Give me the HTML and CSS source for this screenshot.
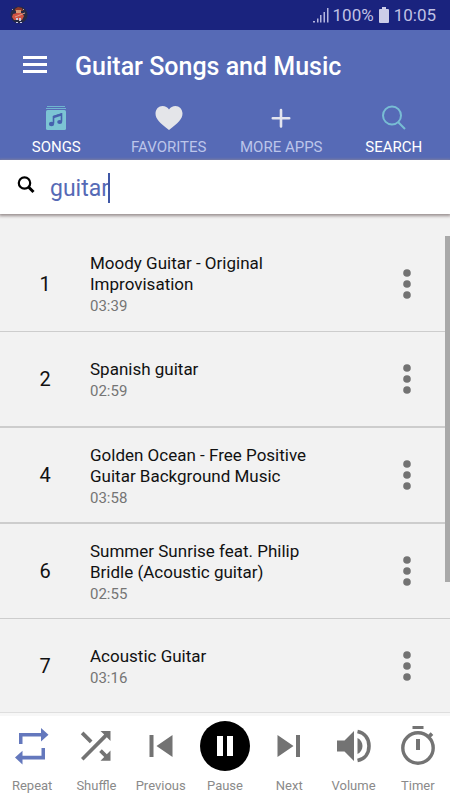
FILE: index.html
```html
<!DOCTYPE html>
<html lang="en">
<head>
<meta charset="utf-8">
<meta name="viewport" content="width=device-width, initial-scale=1">
<title>Guitar Songs and Music</title>
<link rel="stylesheet" href="styles.css">
</head>
<body>
<div class="app">
  <div class="status">
    <svg class="status-app" width="18" height="18" viewBox="0 0 18 18" aria-hidden="true">
      <circle cx="9" cy="9" r="8.500" fill="#272a44"/>
      <path d="M5 3l3-2 4 1 1 3H5z" fill="#8e3a2c"/>
      <path d="M6 4h5v3H6z" fill="#d89a78"/>
      <path d="M3 8l4-1h5l2 3-2 4H4l-2-3z" fill="#cf5142"/>
      <path d="M5 11l10-4" stroke="#d9a08a" stroke-width="1"/>
      <path d="M6 12h2v2H6zM9 12h2v3H9zM6 16h2v1H6zM10 16h2v1h-2z" fill="#c9c8de"/>
      <path d="M2 4l1-1M13 4l1-1" stroke="#b9a798" stroke-width="1"/>
    </svg>
    <div class="status-info">
      <svg class="signal" width="16" height="16" viewBox="0 0 16 16" fill="#b3b5de" aria-hidden="true"><path d="M0 14h2v1.500H0zM4 11.500h1.500v4H4zM7 8h1.500v7.500H7zM10.500 5H12v10.500h-1.500zM14 1h1.500v14.500H14z"/></svg>
      <span>100%</span>
      <svg width="12" height="16" viewBox="0 0 12 16" fill="#cccde8" aria-hidden="true"><path d="M4 0h4v2h2q1 0 1 1v12q0 1-1 1H2q-1 0-1-1V3q0-1 1-1h2z"/></svg>
      <span>10:05</span>
    </div>
  </div>

  <header class="header">
    <div class="titlebar">
      <button class="menu" aria-label="Menu">
        <svg width="24" height="18" viewBox="0 0 24 18" fill="#fff" aria-hidden="true"><path d="M0 0h24v3H0zM0 7h24v3H0zM0 14h24v3H0z"/></svg>
      </button>
      <h1>Guitar Songs and Music</h1>
    </div>
    <nav class="tabs">
      <a class="tab active" href="#songs">
        <svg width="28" height="26" viewBox="0 0 28 26" aria-hidden="true">
          <path d="M5 1h18v1H5zM4 3h20v1H4z" fill="#6fb5cf"/>
          <rect x="4" y="5" width="20" height="20" rx="1.500" fill="#7cc4d4"/>
          <path d="M11.500 18.500v-7l8-2.500v7.500" fill="none" stroke="#4660ae" stroke-width="1.600"/>
          <path d="M11 11l9-3v2.500l-9 3z" fill="#4660ae"/>
          <ellipse cx="9.500" cy="19" rx="2.600" ry="2.200" fill="#4660ae"/>
          <ellipse cx="17.700" cy="17" rx="2.500" ry="2.100" fill="#4660ae"/>
        </svg>
        <span>SONGS</span>
      </a>
      <a class="tab" href="#favorites">
        <svg width="28" height="26" viewBox="0 0 28 26" fill="#e4e5e9" aria-hidden="true"><path d="M14 25C5 18 0.500 14 0.500 8.500 0.500 4 3.800 1 7.500 1 10.200 1 12.700 2.400 14 4.500 15.300 2.400 17.800 1 20.500 1 24.200 1 27.500 4 27.500 8.500 27.500 14 23 18 14 25z"/></svg>
        <span>FAVORITES</span>
      </a>
      <a class="tab" href="#more">
        <svg width="28" height="26" viewBox="0 0 28 26" fill="none" stroke="#e4e5ee" stroke-width="2.600" stroke-linecap="round" aria-hidden="true"><path d="M14 5v16.500M5.800 13.200h16.400"/></svg>
        <span>MORE APPS</span>
      </a>
      <a class="tab active" href="#search">
        <svg width="28" height="26" viewBox="0 0 28 26" fill="none" stroke="#78bdd4" stroke-width="2" aria-hidden="true"><circle cx="12" cy="10.500" r="9"/><path d="M18 17l7 7"/></svg>
        <span>SEARCH</span>
      </a>
    </nav>
  </header>

  <form class="search">
    <label for="query" aria-label="Search songs">
      <svg width="18" height="18" viewBox="0 0 18 18" fill="none" stroke="#000" aria-hidden="true"><circle cx="7.500" cy="7" r="5.700" stroke-width="2.200"/><path d="M11.500 11l5 5" stroke-width="3"/></svg>
    </label>
    <div class="field">
      <input id="query" type="text" value="guitar" autocomplete="off" spellcheck="false">
      <span class="caret"></span>
    </div>
  </form>

  <main class="content">
    <ol class="songs">
      <li class="song"><span class="num">1</span><div class="info"><h2>Moody Guitar - Original Improvisation</h2><p>03:39</p></div><button class="more" aria-label="Options"><svg width="8" height="30" viewBox="0 0 8 30"><circle cx="4" cy="4" r="3.800"/><circle cx="4" cy="15" r="3.800"/><circle cx="4" cy="26" r="3.800"/></svg></button></li>
      <li class="song thick"><span class="num">2</span><div class="info"><h2>Spanish guitar</h2><p>02:59</p></div><button class="more" aria-label="Options"><svg width="8" height="30" viewBox="0 0 8 30"><circle cx="4" cy="4" r="3.800"/><circle cx="4" cy="15" r="3.800"/><circle cx="4" cy="26" r="3.800"/></svg></button></li>
      <li class="song thick"><span class="num">4</span><div class="info"><h2>Golden Ocean - Free Positive Guitar Background Music</h2><p>03:58</p></div><button class="more" aria-label="Options"><svg width="8" height="30" viewBox="0 0 8 30"><circle cx="4" cy="4" r="3.800"/><circle cx="4" cy="15" r="3.800"/><circle cx="4" cy="26" r="3.800"/></svg></button></li>
      <li class="song"><span class="num">6</span><div class="info"><h2>Summer Sunrise feat. Philip Bridle (Acoustic guitar)</h2><p>02:55</p></div><button class="more" aria-label="Options"><svg width="8" height="30" viewBox="0 0 8 30"><circle cx="4" cy="4" r="3.800"/><circle cx="4" cy="15" r="3.800"/><circle cx="4" cy="26" r="3.800"/></svg></button></li>
      <li class="song"><span class="num">7</span><div class="info"><h2>Acoustic Guitar</h2><p>03:16</p></div><button class="more" aria-label="Options"><svg width="8" height="30" viewBox="0 0 8 30"><circle cx="4" cy="4" r="3.800"/><circle cx="4" cy="15" r="3.800"/><circle cx="4" cy="26" r="3.800"/></svg></button></li>
    </ol>
    <div class="scrollbar"></div>
  </main>

  <footer class="player">
    <button class="control repeat"><svg width="50" height="50" viewBox="0 0 50 50"><path d="M12 12h22V7l7.500 6.700-7.500 6.800v-5H15.500V23H12zM38 27v11.500H15.500v5L8 36.500l7.500-6.700v5h19V27z"/></svg><span>Repeat</span></button>
    <button class="control"><svg width="50" height="50" viewBox="0 0 50 50"><path d="M39.500 10v10l-3.700-3.700L12.500 39.500l-2.500-2.600 23.200-23.300L29.500 10zM12.500 10.500l9 9-2.700 2.700-9-9zM30.800 28.200l5 5 3.700-3.700v10.300h-10l3.700-3.700-5-5z"/></svg><span>Shuffle</span></button>
    <button class="control"><svg width="50" height="50" viewBox="0 0 50 50"><path d="M13.500 14h4v22h-4zM36.500 14v22L20.500 25z"/></svg><span>Previous</span></button>
    <button class="control"><svg width="50" height="50" viewBox="0 0 50 50"><circle cx="25" cy="25" r="25" fill="#000"/><path d="M17 15h6v20h-6zM27 15h6v20h-6z" fill="#fff"/></svg><span>Pause</span></button>
    <button class="control"><svg width="50" height="50" viewBox="0 0 50 50"><path d="M13.500 14l16 11-16 11zM32 14h4v22h-4z"/></svg><span>Next</span></button>
    <button class="control"><svg width="50" height="50" viewBox="0 0 50 50"><path d="M8 19.500h7.500L25 10v30l-9.500-9.500H8zM28.500 17c3 1.400 5 4.500 5 8s-2 6.600-5 8z"/><path d="M28.500 10.500c7.500 1.500 11.500 7.500 11.500 14.500s-4 13-11.500 14.500" fill="none" stroke="#737373" stroke-width="3.600"/></svg><span>Volume</span></button>
    <button class="control"><svg width="50" height="50" viewBox="0 0 50 50"><path d="M19.500 5h11v3h-11zM23 18h4v11h-4zM34.500 14.500l3.200-3.200 2.600 2.600-3.200 3.200z"/><circle cx="25" cy="27" r="15.200" fill="none" stroke="#737373" stroke-width="3.400"/></svg><span>Timer</span></button>
  </footer>
</div>
</body>
</html>
```
FILE: styles.css
```css
* {
  box-sizing: border-box;
}

body {
  margin: 0;
  font-family: Roboto, "Liberation Sans", sans-serif;
  background: #f2f2f2;
}

h1, h2, p, ol {
  margin: 0;
  padding: 0;
  font-weight: 400;
}

button {
  margin: 0;
  padding: 0;
  border: 0;
  background: none;
  font: inherit;
}

svg {
  display: block;
  flex: none;
}

.app {
  display: flex;
  flex-direction: column;
  height: 100vh;
}

.status {
  display: flex;
  align-items: center;
  justify-content: space-between;
  height: 30px;
  padding: 0 14px 0 10px;
  background: #1a237e;
}

.status-info {
  display: flex;
  align-items: center;
  gap: 4px;
  color: #c0c1e4;
  font-size: 17px;
  line-height: 30px;
}

.header {
  height: 130px;
  background: #566ab6;
}

.titlebar {
  display: flex;
  align-items: center;
  gap: 28px;
  height: 72px;
  padding: 0 23px;
}

.menu svg {
  margin-bottom: 2px;
}

.titlebar h1 {
  padding-top: 2px;
  color: #fff;
  font-size: 25px;
  font-weight: 500;
  line-height: 30px;
}

.tabs {
  display: grid;
  grid-template-columns: repeat(4, 1fr);
}

.tab {
  display: flex;
  flex-direction: column;
  align-items: center;
  gap: 6px;
  padding-top: 3px;
  color: #bcc5ea;
  font-size: 15px;
  line-height: 20px;
  text-decoration: none;
}

.tab.active {
  color: #fff;
}

.search {
  position: relative;
  z-index: 1;
  display: flex;
  align-items: center;
  gap: 15px;
  height: 54px;
  padding: 0 17px;
  background: #fff;
  box-shadow: 0 1px 3px 1px #998f8f;
}

.search label svg {
  margin-bottom: 4px;
}

.field {
  position: relative;
  flex: 1;
}

.field input {
  display: block;
  width: 100%;
  padding: 4px 0 0;
  border: 0;
  outline: 0;
  background: none;
  color: #566ab6;
  font: 23px/30px Roboto, "Liberation Sans", sans-serif;
}

.caret {
  position: absolute;
  top: 3px;
  left: 58px;
  width: 2px;
  height: 30px;
  background: #3f57a6;
}

.content {
  position: relative;
  flex: 1;
  min-height: 0;
  overflow: hidden;
  padding-top: 22px;
  background: #f7f7f7 linear-gradient(#f2f2f2, #f2f2f2) no-repeat top / 100% 100px;
}

.songs {
  list-style: none;
}

.song {
  display: grid;
  grid-template-columns: 90px 1fr 86px;
  align-items: center;
  height: 96px;
  border-bottom: 1px solid #cdcdcd;
  background: #f2f2f2;
}

.song.thick {
  border-bottom-width: 2px;
}

.song:nth-child(n + 4) {
  height: 95px;
}

.song:last-child {
  height: 94px;
  border-bottom-color: #dedede;
}

.num {
  color: #111;
  font-size: 20px;
  line-height: 24px;
  text-align: center;
}

.info {
  max-width: 240px;
  padding-top: 3px;
}

.info h2 {
  color: #111;
  font-size: 17px;
  line-height: 21px;
}

.info p {
  color: #757575;
  font-size: 15px;
  line-height: 22px;
}

.more {
  display: flex;
  justify-content: center;
  fill: #737373;
}

.scrollbar {
  position: absolute;
  top: 22px;
  right: 0;
  width: 5px;
  height: 346px;
  background: #a9a9a9;
}

.player {
  display: grid;
  grid-template-columns: repeat(7, 1fr);
  height: 84px;
  padding-top: 5px;
  background: #fff;
}

.control {
  display: flex;
  flex-direction: column;
  align-items: center;
  gap: 6px;
  color: #8a8a8a;
  font-size: 13px;
  line-height: 18px;
  fill: #737373;
}

.repeat {
  fill: #6478bd;
}
```
